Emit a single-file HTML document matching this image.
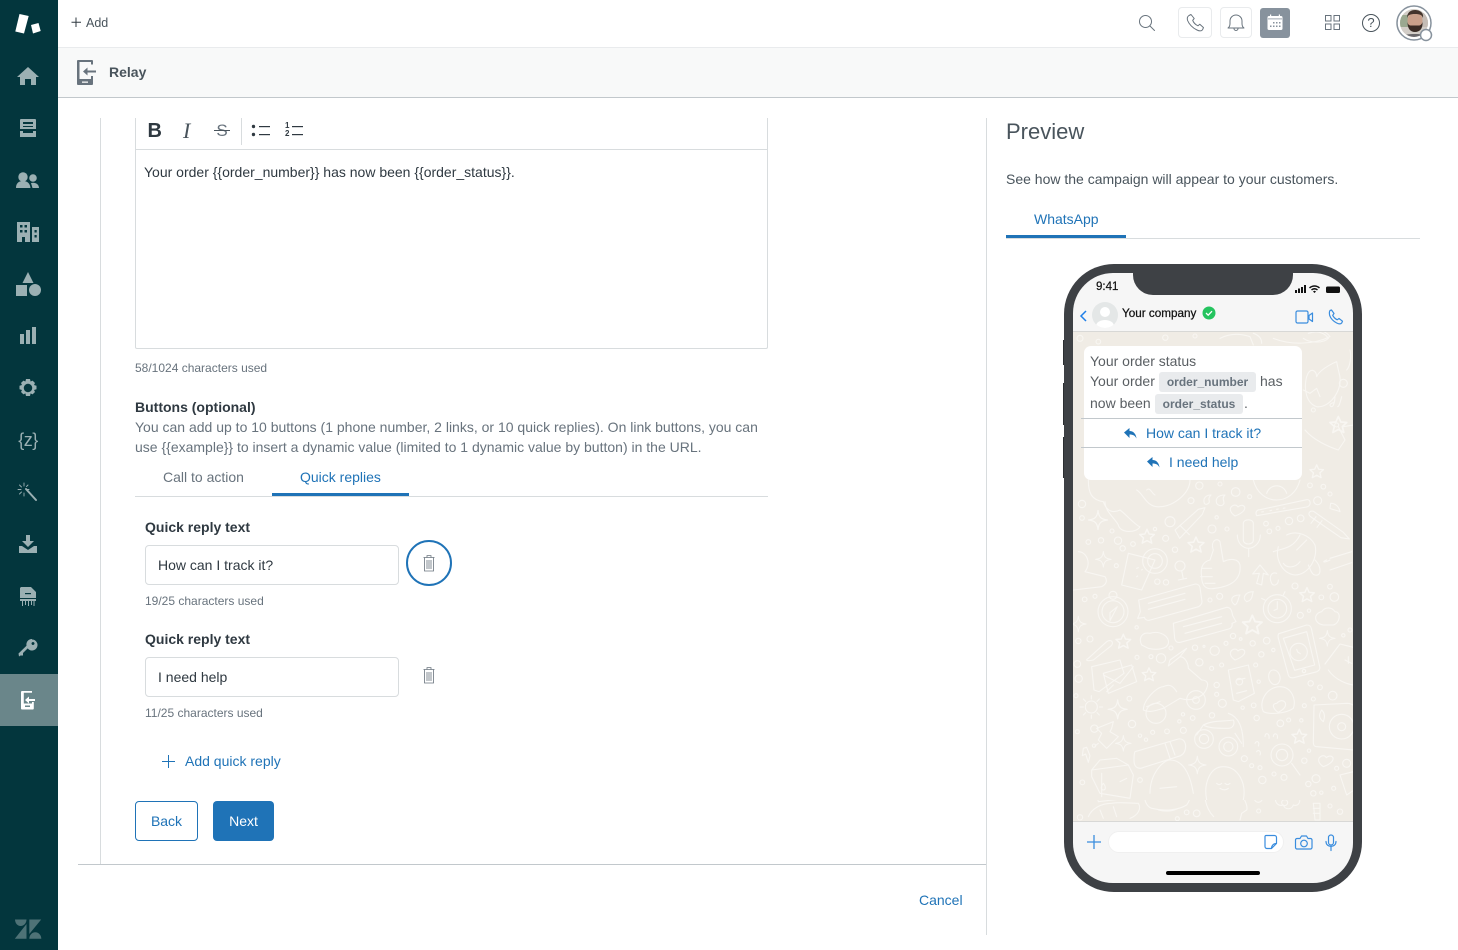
<!DOCTYPE html>
<html lang="en"><head><meta charset="utf-8"><title>Relay</title>
<style>
html,body{margin:0;padding:0;width:1458px;height:950px;overflow:hidden;background:#fff}
body{font-family:"Liberation Sans",Arial,sans-serif;color:#2f3941;position:relative;font-size:14px}
.a{position:absolute;white-space:nowrap}
.line{position:absolute;background:#d8dcde}
.hint{color:#68737d;font-size:12px;line-height:16px}
.lab{font-weight:700;font-size:14px;line-height:20px;color:#2f3941}
.body{color:#68737d;font-size:14px;line-height:20px}
.inp{position:absolute;left:145px;width:252px;height:38px;border:1px solid #d8dcde;border-radius:4px;line-height:38px;text-indent:12px;color:#2f3941;font-size:14px;background:#fff}
svg{position:absolute;overflow:visible}
.ic{fill:#9bb0b3;stroke:none}
.top{fill:none;stroke:#68737d;stroke-width:1;stroke-linecap:round;stroke-linejoin:round}
.blue{fill:none;stroke:#3a8dde;stroke-width:1.2;stroke-linecap:round;stroke-linejoin:round}
.box{position:absolute;border:1px solid #e9ebed;border-radius:4px;background:#fff;box-sizing:border-box}
.chip{position:absolute;background:#e9ebed;border-radius:3px;color:#68737d;font-weight:700;font-size:12px;line-height:20px;text-align:center}
.b{position:absolute;font-size:14px;line-height:20px;color:#5a5f63;white-space:nowrap}
.qr{position:absolute;color:#1f73b7;font-size:14px;line-height:20px;white-space:nowrap}
</style></head><body>

<!-- Sidebar -->
<div class="a" style="left:0;top:0;width:58px;height:950px;background:#03363d"></div>
<div class="a" style="left:0;top:674px;width:58px;height:52px;background:#6a868a"></div>
<svg style="left:0;top:0" width="58" height="950" viewBox="0 0 58 950">
<polygon points="19.5,14 28.7,16 24,33.5 15.3,31.5" fill="#fff"/>
<polygon points="31,25 38.5,23 40.7,31 33,33.5" fill="#fff"/>
<path class="ic" d="M28 67l11 10h-3v8h-5v-6h-6v6h-5v-8h-3z"/>
<path class="ic" d="M21 119h14a1 1 0 0 1 1 1v9H20v-9a1 1 0 0 1 1-1zm2 3v2h10v-2zm0 4v1h10v-1zM20 131h3v2h10v-2h3v6H20z" fill-rule="evenodd"/>
<circle class="ic" cx="23" cy="177" r="4.7"/><circle class="ic" cx="33" cy="178" r="3.8"/>
<path class="ic" d="M16 188c0-5 3-7 7-7s7 2 7.500 7zM31 183c4-1 8 1 8 5h-6.500z"/>
<path class="ic" d="M17 222h13v20h-5v-5h-3v5h-5zM32 227h7v15h-7z"/>
<g fill="#03363d"><rect x="20" y="225" width="2.500" height="2.500"/><rect x="24.500" y="225" width="2.500" height="2.500"/><rect x="20" y="230" width="2.500" height="2.500"/><rect x="24.500" y="230" width="2.500" height="2.500"/><rect x="34.500" y="230" width="2.200" height="2.500"/><rect x="34.500" y="235" width="2.200" height="2.500"/></g>
<polygon class="ic" points="28,272 33.500,283 22.500,283"/><rect class="ic" x="16" y="285" width="11" height="11"/><circle class="ic" cx="35" cy="290" r="6"/>
<rect class="ic" x="20" y="334" width="4" height="10"/><rect class="ic" x="26" y="330" width="4" height="14"/><rect class="ic" x="32" y="327" width="4" height="17"/>
<path class="ic" fill-rule="evenodd" d="M26 379h4l.6 2.500 2-.9 2.400 2.400-1 2 2.500.8v3.400l-2.500.8 1 2-2.400 2.400-2-1-.6 2.600h-4l-.6-2.600-2 1-2.400-2.400 1-2-2.500-.8v-3.400l2.500-.8-1-2 2.400-2.400 2 .9zM28 383.800a4.200 4.200 0 1 0 .01 0z"/>
<g stroke="#9bb0b3" fill="none" stroke-linecap="round">
<path stroke-width="2" d="M26 489l10 11"/>
<path stroke-width=".9" d="M24 483v3M24 493v3M18 489.500h3M27 489.500h2M19.500 485l2 2M19.500 494l2-2M28 485l-1.500 1.500"/>
</g>
<path class="ic" d="M26 535h4v6h4l-6 6-6-6h4zM19 546h3l6 4 6-4h3v7H19z"/>
<path class="ic" d="M21 587h10l5 5v6H20v-10zM20 599h16v2H20z"/>
<g stroke="#9bb0b3" stroke-width="1" fill="none"><path d="M22.500 601v5M25.500 601v4M28.500 601v5M31.500 601v4M34 601v5"/></g>
<rect x="25" y="593" width="6" height="1.200" fill="#03363d"/>
<path class="ic" fill-rule="evenodd" d="M32 639.500a5.500 5.500 0 1 1-4.300 8.900L23 653v2.500h-2.500l-1.500 1-.500-3 8-7.800a5.500 5.500 0 0 1 5.500-6.700zm1 2.500a1.500 1.500 0 1 0 .01 0z"/>
<g fill="#fff"><path d="M22 691h10v1.800h-8.200v10.700H32v-1.500h1.800v6.500a1 1 0 0 1-1 1H22a1 1 0 0 1-1-1v-16.500a1 1 0 0 1 1-1z"/><path d="M35 699h-6v-2.500l-4 3.500 4 3.500V701h6z"/><rect x="25" y="705.500" width="5" height="1.500" fill="#6a868a"/></g>
<g fill="#4e7276"><path d="M15 919.500h11.500c0 3.500-2.500 6.500-6 6.500-3 0-5.500-3-5.500-6.500z"/><polygon points="26.500,924 26.500,938.700 14.800,938.700"/><polygon points="29.300,919.500 41.200,919.500 29.300,934"/><path d="M29.300 938.700c0-3.500 2.600-6.500 6-6.500s6 3 6 6.500z"/></g>
</svg>
<div class="a" style="left:0;top:430px;width:56px;text-align:center;color:#9bb0b3;font-family:'Liberation Sans',sans-serif;font-size:18px;line-height:20px;letter-spacing:-.5px">{z}</div>

<!-- Top bar -->
<div class="a" style="left:58px;top:47px;width:1400px;height:1px;background:#e9ebed"></div>
<svg style="left:70.500px;top:16.500px" width="12" height="12"><path d="M5 .5v9.500M.5 5.200h9.500" stroke="#2f3941" stroke-width="1" fill="none"/></svg>
<div class="a" style="left:86px;top:14.500px;font-size:12.500px;line-height:16px;color:#49545c">Add</div>

<svg style="left:1138px;top:14px" width="18" height="18" viewBox="0 0 18 18"><circle class="top" cx="7.500" cy="7.500" r="6"/><path class="top" d="M12 12l4.500 4.500"/></svg>
<div class="box" style="left:1178px;top:7px;width:34px;height:31px"></div>
<svg style="left:1186px;top:14px" width="18" height="18" viewBox="0 0 18 18"><path class="top" d="M3 1.500l2-1 3.200 4-1.500 1.800c.7 2 2.700 4.300 5.300 5.500l1.800-1.500 3.700 3.300-1 2.200c-1 1.200-3 1.500-5.500.2C6.500 14 3 10 1.600 6.500c-.6-2-.2-4 1.400-5z"/></svg>
<div class="box" style="left:1220px;top:7px;width:32px;height:31px"></div>
<svg style="left:1227px;top:14px" width="18" height="18" viewBox="0 0 18 18"><path class="top" d="M1 14c1.500-1 2-2.500 2-4.500V7a6 6 0 0 1 12 0v2.500c0 2 .5 3.500 2 4.500zM7 14.500a2 2 0 0 0 4 0"/></svg>
<div class="a" style="left:1260px;top:8px;width:30px;height:30px;background:#87929d;border-radius:3px"></div>
<svg style="left:1267px;top:14px" width="17" height="18" viewBox="0 0 17 18"><rect x=".5" y="2" width="15" height="14" rx="1.500" fill="#fff"/><rect x="3" y=".5" width="1.200" height="3" fill="#fff"/><rect x="11.800" y=".5" width="1.200" height="3" fill="#fff"/><rect x="1" y="4.500" width="14" height=".8" fill="#87929d"/><g fill="#87929d"><rect x="6" y="8" width="1.500" height="1.500"/><rect x="9" y="8" width="1.500" height="1.500"/><rect x="12" y="8" width="1.500" height="1.500"/><rect x="3" y="11.500" width="1.500" height="1.500"/><rect x="6" y="11.500" width="1.500" height="1.500"/><rect x="9" y="11.500" width="1.500" height="1.500"/><rect x="12" y="11.500" width="1.500" height="1.500"/></g></svg>
<svg style="left:1325px;top:15px" width="16" height="16" viewBox="0 0 16 16"><g fill="none" stroke="#68737d"><rect x=".5" y=".5" width="5.500" height="5.500"/><rect x="9" y=".5" width="5.500" height="5.500"/><rect x=".5" y="9" width="5.500" height="5.500"/><rect x="9" y="9" width="5.500" height="5.500"/></g></svg>
<svg style="left:1362px;top:14px" width="18" height="18" viewBox="0 0 18 18"><circle cx="9" cy="9" r="8.500" fill="none" stroke="#49545c"/></svg>
<div class="a" style="left:1362px;top:14px;width:18px;text-align:center;font-size:13px;line-height:18px;color:#49545c">?</div>
<svg style="left:1396px;top:5px" width="38" height="38" viewBox="0 0 38 38">
<circle cx="18" cy="18" r="17" fill="#fff" stroke="#87929d" stroke-width="1.500"/>
<clipPath id="av"><circle cx="18" cy="18" r="14"/></clipPath>
<g clip-path="url(#av)"><rect x="0" y="0" width="36" height="36" fill="#d2cdc7"/><rect x="3" y="10" width="9" height="12" fill="#9aa890"/><rect x="25" y="8" width="9" height="14" fill="#c4bcb5"/>
<ellipse cx="19" cy="16" rx="7.500" ry="10" fill="#c9a08a"/>
<path d="M11 13c0-6 4-8 8-8s9 2 8 8c-1-3-3-4-8-4s-7 1-8 4z" fill="#43342c"/>
<path d="M11.500 17c0 7 3 10 7.500 10s8-3 7.500-10c-1 3-2.500 3.500-3.500 3.500h-8c-1.500 0-3-.5-3.500-3.500z" fill="#3a2c25"/>
<path d="M3 36c1-6 7-7 16-7s13 1 14 7z" fill="#6a686b"/></g>
<circle cx="30" cy="30" r="5.500" fill="#fff" stroke="#87929d" stroke-width="1.500"/>
</svg>

<!-- Sub header -->
<div class="a" style="left:58px;top:48px;width:1400px;height:49px;background:#f8f9f9"></div>
<div class="a" style="left:58px;top:97px;width:1400px;height:1px;background:#c2c8cc"></div>
<svg style="left:76px;top:59px" width="21" height="27" viewBox="0 0 21 27"><path d="M2 1h14a1 1 0 0 1 1 1v3.500h-2V3H3.500v17H15v-3h2v8a1 1 0 0 1-1 1H2a1 1 0 0 1-1-1V2a1 1 0 0 1 1-1z" fill="#68737d"/><rect x="6" y="22.500" width="6" height="1.300" fill="#f8f9f9"/><path d="M20 11.500h-8.500V8.500L7 12.500l4.500 4v-3H20z" fill="#68737d"/></svg>
<div class="a" style="left:109px;top:63px;font-weight:700;font-size:14px;line-height:18px;color:#49545c">Relay</div>

<!-- Main lines -->
<div class="line" style="left:100px;top:118px;width:1px;height:746px"></div>
<div class="line" style="left:986px;top:118px;width:1px;height:817px"></div>
<div class="a" style="left:78px;top:864px;width:908px;height:1px;background:#c2c8cc"></div>

<!-- Editor -->
<div class="a" style="left:135px;top:118px;width:631px;height:230px;border:1px solid #d8dcde;border-top:0;border-radius:0 0 2px 2px"></div>
<div class="a" style="left:136px;top:149px;width:631px;height:1px;background:#d8dcde"></div>
<div class="a" style="left:147.500px;top:119px;font-weight:700;font-size:20px;line-height:24px;color:#2f3941">B</div>
<div class="a" style="left:183px;top:118.500px;font-family:'Liberation Serif',serif;font-style:italic;font-size:22px;line-height:24px;color:#49545c">I</div>
<div class="a" style="left:215px;top:118.500px;font-family:'Liberation Sans',sans-serif;font-size:17px;line-height:24px;color:#68737d;width:14px;text-align:center">S</div>
<div class="a" style="left:214px;top:130px;width:16px;height:1px;background:#49545c"></div>
<div class="a" style="left:241px;top:118px;width:1px;height:27px;background:#d8dcde"></div>
<svg style="left:251px;top:123px" width="54" height="16" viewBox="0 0 54 16"><g fill="#2f3941"><circle cx="2.500" cy="3.500" r="1.700"/><circle cx="2.500" cy="11.500" r="1.700"/><rect x="8" y="3" width="11" height="1.200"/><rect x="8" y="11" width="11" height="1.200"/><rect x="41" y="3" width="11" height="1.200"/><rect x="41" y="11" width="11" height="1.200"/></g></svg>
<div class="a" style="left:285px;top:122px;font-size:8px;line-height:8px;font-weight:700;color:#2f3941">1<br>2</div>
<div class="a" style="left:144px;top:162px;font-size:14px;line-height:20px;color:#2f3941">Your order {{order_number}} has now been {{order_status}}.</div>

<div class="a hint" style="left:135px;top:360px">58/1024 characters used</div>
<div class="a lab" style="left:135px;top:397px">Buttons (optional)</div>
<div class="a body" style="left:135px;top:417px">You can add up to 10 buttons (1 phone number, 2 links, or 10 quick replies). On link buttons, you can</div>
<div class="a body" style="left:135px;top:437px">use {{example}} to insert a dynamic value (limited to 1 dynamic value by button) in the URL.</div>

<div class="a body" style="left:163px;top:467px;color:#68737d">Call to action</div>
<div class="a body" style="left:300px;top:467px;color:#1f73b7">Quick replies</div>
<div class="a" style="left:135px;top:496px;width:633px;height:1px;background:#d8dcde"></div>
<div class="a" style="left:272px;top:493px;width:137px;height:3px;background:#1f73b7"></div>

<div class="a lab" style="left:145px;top:517px">Quick reply text</div>
<div class="inp" style="top:545px">How can I track it?</div>
<div class="a" style="left:406px;top:540px;width:42px;height:42px;border:2px solid #1f73b7;border-radius:50%"></div>
<svg style="left:423px;top:555px" width="12" height="17" viewBox="0 0 12 17"><g fill="none" stroke="#68737d" stroke-width=".8"><path d="M.5 2.500h11M4 2.500V.6h4v1.900M1.500 2.500v13.500h9V2.500M4 5v9M6 5v9M8 5v9"/></g></svg>
<div class="a hint" style="left:145px;top:593px">19/25 characters used</div>

<div class="a lab" style="left:145px;top:629px">Quick reply text</div>
<div class="inp" style="top:657px">I need help</div>
<svg style="left:423px;top:667px" width="12" height="17" viewBox="0 0 12 17"><g fill="none" stroke="#68737d" stroke-width=".8"><path d="M.5 2.500h11M4 2.500V.6h4v1.900M1.500 2.500v13.500h9V2.500M4 5v9M6 5v9M8 5v9"/></g></svg>
<div class="a hint" style="left:145px;top:705px">11/25 characters used</div>

<svg style="left:162px;top:755px" width="14" height="14"><path d="M6.500 0v13M0 6.500h13" stroke="#1f73b7" stroke-width="1" fill="none"/></svg>
<div class="a" style="left:185px;top:751px;font-size:14px;line-height:20px;color:#1f73b7">Add quick reply</div>

<div class="a" style="left:135px;top:801px;width:61px;height:38px;border:1px solid #1f73b7;border-radius:4px;text-align:center;line-height:38px;color:#1f73b7;font-size:14px">Back</div>
<div class="a" style="left:213px;top:801px;width:61px;height:40px;background:#1f73b7;border-radius:4px;text-align:center;line-height:40px;color:#fff;font-size:14px">Next</div>
<div class="a" style="left:919px;top:890px;font-size:14px;line-height:20px;color:#1f73b7">Cancel</div>

<!-- Preview -->
<div class="a" style="left:1006px;top:118px;font-size:22px;line-height:28px;color:#49545c">Preview</div>
<div class="a" style="left:1006px;top:169px;font-size:14px;line-height:20px;color:#49545c">See how the campaign will appear to your customers.</div>
<div class="a" style="left:1034px;top:209px;font-size:14px;line-height:20px;color:#1f73b7">WhatsApp</div>
<div class="a" style="left:1006px;top:238px;width:414px;height:1px;background:#d8dcde"></div>
<div class="a" style="left:1006px;top:235px;width:120px;height:3px;background:#1f73b7"></div>

<!-- Phone -->
<div class="a" style="left:1063px;top:340px;width:2px;height:25px;background:#2b2e31"></div>
<div class="a" style="left:1063px;top:383px;width:2px;height:42px;background:#2b2e31"></div>
<div class="a" style="left:1063px;top:437px;width:2px;height:41px;background:#2b2e31"></div>
<div class="a" style="left:1064px;top:264px;width:298px;height:628px;border-radius:50px;background:#3e4145"></div>
<div class="a" style="left:1073px;top:273px;width:280px;height:610px;border-radius:40px;background:#f6f6f6;overflow:hidden">
 <div class="a" style="left:0;top:59px;width:280px;height:489px;background:#f0ece5"></div>
 <div class="a" style="left:0;top:58px;width:280px;height:1px;background:#d8d8d6"></div>
 <div class="a" style="left:0;top:548px;width:280px;height:1px;background:#d8d8d6"></div>
</div>
<div class="a" style="left:1133px;top:272px;width:160px;height:23px;background:#3e4145;border-radius:0 0 20px 20px"></div>
<div class="a" style="left:1096px;top:280px;font-size:11.500px;line-height:14px;font-weight:400;color:#111;-webkit-text-stroke:.2px #111">9:41</div>
<svg style="left:1294px;top:283px" width="48" height="12" viewBox="0 0 48 12"><g fill="#111"><rect x="1" y="7" width="2" height="3"/><rect x="4" y="5.500" width="2" height="4.500"/><rect x="7" y="4" width="2" height="6"/><rect x="10" y="2" width="2" height="8"/><path d="M15 4.500c3-3 8-3 11 0l-1 1c-2.500-2.300-6.500-2.300-9 0zM17 6.500c2-2 5-2 7 0l-1 1c-1.500-1.200-3.500-1.200-5 0zM19 8.500c1-1 2-1 3 0l-1.500 1.500z"/><rect x="32" y="3.500" width="14" height="6.500" rx="1.500"/></g></svg>

<!-- Header in phone -->
<svg style="left:1078px;top:301px" width="140" height="30" viewBox="0 0 140 30">
<path d="M8 10l-5 5 5 5" fill="none" stroke="#1f7fe8" stroke-width="1.500"/>
<circle cx="27" cy="14" r="13" fill="#e4e7e7"/>
<clipPath id="pa"><circle cx="27" cy="14" r="13"/></clipPath>
<g clip-path="url(#pa)" fill="#fff"><circle cx="27" cy="11" r="5"/><ellipse cx="27" cy="25" rx="9" ry="6"/></g>
<circle cx="131" cy="12" r="6.500" fill="#25c45f"/><path d="M128 12l2.200 2.200 3.800-4" stroke="#fff" stroke-width="1.300" fill="none"/>
</svg>
<div class="a" style="left:1122px;top:306px;font-size:11.700px;line-height:15px;color:#111;-webkit-text-stroke:.25px #111">Your company</div>
<svg style="left:1295px;top:309px" width="50" height="18" viewBox="0 0 50 18">
<path class="blue" d="M1 3.500a1.500 1.500 0 0 1 1.500-1.500h9A1.500 1.500 0 0 1 13 3.500v9a1.500 1.500 0 0 1-1.500 1.500h-9A1.500 1.500 0 0 1 1 12.500zM14 6.500l3.500-2.500v8.500L14 10z" />
<path class="blue" d="M35 1.500l1.500-.5 2.500 3.500-1.300 1.800c1 2 2.500 3.500 4.500 4.500l1.800-1.300 3.500 2.700-.8 1.800c-1 1.200-3 1-5 0-3-1.500-6-4.500-7-7.500-.5-2-.3-4 .3-5z"/>
</svg>

<!-- Wallpaper doodles -->
<svg style="left:1073px;top:332px" width="280" height="489" viewBox="1073 332 280 489">
<clipPath id="wc"><rect x="1073" y="332" width="280" height="468"/></clipPath>
<clipPath id="wd"><rect x="1073" y="800" width="280" height="21"/></clipPath>
<defs>
<path id="st" d="M0-17L5-6 17-5 8 3 11 15 0 9-11 15-8 3-17-5-5-6z"/>
<path id="sp" d="M0-26C2-8 8-2 26 0 8 2 2 8 0 26-2 8-8 2-26 0-8-2-2-8 0-26z"/>
</defs>
<g clip-path="url(#wc)" fill="none" stroke="#f8f6f2" stroke-linecap="round" stroke-linejoin="round">
<g transform="translate(1070 480) scale(.33333)" stroke-width="3.300">
 <path d="M55 0c0 40 10 60 45 65 10 30 30 35 50 25 15 10 50 50 60 50-10 20-60 20-65-5-10-20-40-40-40-70M200 30c20 10 30 55 70 50 40 0 90-40 90-80M230 30c10-10 15 10 25 15"/>
 <path d="M550 0c10 40 40 60 70 60s60-20 70-60M590 40c10-30 50-30 60 0"/>
 <circle cx="36" cy="72" r="11"/><circle cx="36" cy="114" r="7"/><circle cx="388" cy="17" r="11"/><circle cx="363" cy="62" r="9"/><circle cx="497" cy="36" r="13"/><circle cx="450" cy="12" r="6"/><circle cx="539" cy="50" r="6"/><circle cx="300" cy="125" r="15"/><circle cx="426" cy="147" r="12"/><circle cx="440" cy="112" r="5"/><circle cx="471" cy="147" r="6"/><circle cx="657" cy="123" r="11"/><circle cx="692" cy="115" r="10"/><circle cx="743" cy="62" r="12"/><circle cx="720" cy="16" r="7"/><circle cx="760" cy="20" r="7"/><circle cx="780" cy="42" r="6"/><circle cx="588" cy="131" r="7"/><circle cx="598" cy="154" r="7"/><circle cx="624" cy="145" r="6"/><circle cx="126" cy="153" r="6"/><circle cx="55" cy="186" r="7"/><circle cx="93" cy="181" r="8"/><circle cx="144" cy="182" r="11"/><circle cx="158" cy="205" r="8"/><circle cx="189" cy="192" r="7"/><circle cx="255" cy="147" r="5"/><circle cx="287" cy="175" r="9"/><circle cx="315" cy="209" r="8"/><circle cx="139" cy="257" r="6"/>
 <path d="M315 150l70-62 20-5-8 20-68 72zM330 136l28 28"/>
 <path d="M403 70c-5-15 5-25 20-25-10 10-5 15-5 20s-10 12-15 5zM440 70c-5-15 5-25 25-25-10 10-3 15-3 25-5 10-17 8-22 0z"/>
 <path d="M495 108c-15-10-20-25-5-32 8-3 12 2 14 5 5-5 15-8 20 0 3 12-15 22-29 27z"/>
 <path d="M560 107c-5-10 0-18 10-18l140-30c14-2 14 20 0 22z"/><path d="M575 96l5-1M600 92l5-1M620 88l5-1M640 85l5-1"/>
 <path d="M782 70c15 0 25 10 28 25-10-5-20-5-30-10z"/>
 <use href="#sp" transform="translate(84 120) scale(1.100)"/>
 <use href="#st" transform="translate(231 170) scale(1.300)"/>
 <use href="#st" transform="translate(378 195) scale(1.400)"/>
 <path d="M735 97l85 60 18 20-25-4-90-62c-15-10 0-25 12-14zM738 110l-15 20M756 122l-15 20"/>
 <path d="M520 130c0-14 30-14 30 0v50c0 16-30 16-30 0zM502 165c0 28 20 40 34 40s35-14 35-40M536 205v25"/>
 <path d="M620 280c-15-5-25 10-15 30 5 10 20 5 20-10M650 165c30-15 70 0 85 30 10 40-20 90-60 90-40-5-60-50-50-85M610 215c30-10 60-10 80-50M680 210l30-30 M640 250c10 15 35 15 50-5M735 240c20 20 20 50 0 45-10 0-15-20-20-30"/>
 <path d="M780 235l65-20M780 270l65-22M770 240c-15 5-10 10 10 0"/>
 <path d="M570 255l25 30-15-5-5 35-15-5 8-30-20 2z"/>
 <path d="M25 215c25 0 40 35 20 60l60 15c10 15 0 25-10 30L10 330"/>
 <path d="M175 220l80 20-40 90-60-15zM200 265l5-2M215 270l2-2M200 290l3-2"/><circle cx="255" cy="243" r="37"/><circle cx="255" cy="243" r="22"/>
 <circle cx="262" cy="305" r="8"/><circle cx="288" cy="307" r="8"/>
 <circle cx="330" cy="258" r="15"/><path d="M335 272l5 25M325 300l25-5"/>
 <path d="M420 240c-20 5-30 20-25 50 0 30 15 40 40 35 40-5 80-20 75-70-5-20-30-20-50-10l-10-60c-10-15-30 0-20 25zM395 265h30M392 290h35M405 310h30"/>
 <path d="M206 360l170-48c12 0 15 10 15 18l5 35c0 8-5 12-10 15l-145 40c-8 3-15 0-18-8l-20 3 8-20z"/>
 <path d="M235 370l110-30M235 388l110-30"/>
 <path d="M310 430l160-48c12 0 15 8 18 25l10 18-12 5c2 10-3 15-10 17l-145 40c-10 2-15-3-17-12z"/><path d="M340 440l115-30M345 460l110-30"/>
 <circle cx="129" cy="395" r="45"/><circle cx="129" cy="395" r="33"/><circle cx="129" cy="346" r="12"/><path d="M142 380l-22 42 0-24z"/>
 <circle cx="622" cy="386" r="42"/><circle cx="622" cy="386" r="28"/><path d="M622 365v22l-10 4M575 355l10 5M645 335l-5 10"/>
 <path d="M495 375c-15-10-15-30 15-30-5 5-5 25-15 30zM530 365c-15-10-5-30 20-30-5 10 0 25-20 30z"/>
 <path d="M760 435c-30-5-30-35-5-40 10-15 30-15 40 0 20 0 15 35-5 40z"/>
 <use href="#st" transform="translate(711 345) scale(1.300)"/>
 <use href="#st" transform="translate(547 435) scale(1.700)"/>
 <use href="#st" transform="translate(160 485) scale(1.300)"/>
 <use href="#sp" transform="translate(25 432) scale(.9)"/>
 <use href="#sp" transform="translate(772 475) scale(.9)"/>
 <use href="#sp" transform="translate(100 238) scale(.9)"/>
 <path d="M215 495c-10-20 0-40 25-35 30-10 60 10 55 30-5 20-40 20-60 15z"/>
 <path d="M55 535l55-50c15-10 25 5 10 15l-50 40c-20 5-25 0-15-5z"/>
 <circle cx="200" cy="442" r="5"/><circle cx="25" cy="483" r="8"/><circle cx="60" cy="477" r="9"/><circle cx="201" cy="532" r="6"/><circle cx="243" cy="530" r="6"/><circle cx="273" cy="535" r="14"/><circle cx="375" cy="503" r="8"/><circle cx="402" cy="499" r="3"/><circle cx="434" cy="512" r="14"/><circle cx="468" cy="490" r="6"/><circle cx="489" cy="468" r="8"/><circle cx="512" cy="477" r="4"/><circle cx="548" cy="490" r="8"/><circle cx="590" cy="482" r="10"/><circle cx="574" cy="523" r="8"/><circle cx="610" cy="510" r="5"/><circle cx="557" cy="555" r="6"/><circle cx="420" cy="360" r="6"/><circle cx="449" cy="349" r="9"/><circle cx="675" cy="318" r="9"/><circle cx="780" cy="320" r="7"/><circle cx="754" cy="352" r="7"/><circle cx="793" cy="351" r="13"/><circle cx="691" cy="406" r="9"/><circle cx="717" cy="392" r="5"/><circle cx="44" cy="358" r="7"/><circle cx="75" cy="349" r="6"/><circle cx="840" cy="450" r="6"/><circle cx="820" cy="466" r="5"/><circle cx="303" cy="504" r="6"/><circle cx="388" cy="547" r="11"/><circle cx="425" cy="565" r="6"/><circle cx="455" cy="555" r="6"/><circle cx="440" cy="615" r="8"/><circle cx="440" cy="643" r="6"/><circle cx="457" cy="670" r="12"/><circle cx="566" cy="605" r="5"/><circle cx="518" cy="683" r="5"/><circle cx="551" cy="676" r="7"/><circle cx="22" cy="552" r="10"/><circle cx="26" cy="596" r="11"/><circle cx="18" cy="647" r="6"/><circle cx="178" cy="656" r="7"/><circle cx="426" cy="706" r="8"/><circle cx="368" cy="714" r="7"/><circle cx="339" cy="703" r="5"/><circle cx="328" cy="724" r="5"/><circle cx="722" cy="610" r="8"/><circle cx="750" cy="622" r="7"/><circle cx="788" cy="647" r="13"/><circle cx="703" cy="677" r="6"/><circle cx="730" cy="657" r="6"/><circle cx="560" cy="714" r="8"/><circle cx="631" cy="730" r="10"/><circle cx="656" cy="720" r="6"/><circle cx="694" cy="721" r="5"/>
 <path d="M630 460l80-25c8 0 12 3 14 10l25 115c2 8-2 12-8 15l-70 18c-10 2-14-2-16-8l-30-110c-2-10 0-15 5-15zM640 475l70-20 24 100-60 16z"/><circle cx="686" cy="516" r="26"/><path d="M680 508l3 8 8 5"/><circle cx="702" cy="573" r="5"/>
 <path d="M495 540c-15-10-20-25-5-32 8-3 12 2 14 5 5-5 15-8 20 0 3 12-15 22-29 27z"/>
 <path d="M765 552l45-60 40 10M775 570c20 30 60 45 80 45M825 540l20 10M835 530v20"/>
 <path d="M65 560l85-20 12 40-75 55-15-5z"/><path d="M100 580l85-25 15 50-85 35zM100 585l50 25 40-50M110 635l20-20"/>
 <use href="#st" transform="translate(237 584) scale(1.200)"/>
 <path d="M330 530l20-25-50 35-5 18zM330 530c15 0 25 20 25 35l40 35c20 0 20 15 15 25-10 30-50 40-80 30l-50 30c-20 5-40 15-60 5 0-30 40-70 60-70 20-10 30 0 40 15"/><circle cx="378" cy="660" r="28"/><circle cx="378" cy="660" r="10"/><circle cx="258" cy="700" r="30"/><path d="M230 680l40-15"/>
 <path d="M475 570l60-15 18 85-48 25-15-5zM500 600l25-5M500 640l30-8"/><circle cx="508" cy="605" r="10"/>
 <path d="M610 570c15 0 25 20 18 35-5 10-20 15-30-5-5-15 0-30 12-30zM580 695c-15-30 10-75 50-75 35 0 50 40 40 65-20 15-70 20-90 10zM620 670c10-10 20-10 25-3 5 8 0 20-20 30-10-5-25-25-5-27z"/>
 <path d="M732 675l100-5c10 0 20 5 20 10v130l-110-10c-10 0-12-5-12-15z"/><circle cx="815" cy="740" r="37"/><circle cx="815" cy="740" r="12"/><path d="M755 690c-10 15-8 25 5 35 5-15 5-25-5-35z"/>
 <circle cx="64" cy="681" r="18"/><path d="M64 647v10M64 705v10M30 681h10M88 681h10M40 657l7 7M88 705l-7-7M88 657l-7 7M40 705l7-7"/>
 <use href="#sp" transform="translate(143 688) scale(1.100)"/>
 <use href="#sp" transform="translate(160 790) scale(.9)"/>
 <use href="#sp" transform="translate(382 855) scale(1)"/>
 <use href="#st" transform="translate(688 770) scale(1.300)"/>
 <circle cx="73" cy="746" r="11"/><circle cx="22" cy="755" r="6"/><circle cx="72" cy="797" r="5"/><circle cx="186" cy="732" r="11"/><circle cx="210" cy="767" r="5"/><circle cx="228" cy="779" r="5"/><circle cx="248" cy="757" r="6"/><circle cx="291" cy="754" r="7"/><circle cx="340" cy="751" r="9"/><circle cx="523" cy="836" r="9"/><circle cx="545" cy="857" r="6"/><circle cx="570" cy="863" r="6"/><circle cx="577" cy="900" r="11"/><circle cx="612" cy="882" r="6"/><circle cx="642" cy="892" r="9"/><circle cx="703" cy="842" r="8"/><circle cx="717" cy="812" r="5"/><circle cx="830" cy="850" r="12"/><circle cx="800" cy="865" r="6"/><circle cx="738" cy="896" r="12"/><circle cx="715" cy="912" r="8"/><circle cx="754" cy="938" r="5"/><circle cx="730" cy="940" r="8"/><circle cx="791" cy="925" r="6"/><circle cx="37" cy="907" r="7"/><circle cx="210" cy="900" r="7"/>
 <path d="M80 745l50-20-5 20-5 10 25 15-20 20-15 15-25-25 10-20zM85 790l-10 8"/>
 <path d="M40 805l10-3 10 25-5 20-8-25-10 5z"/>
 <path d="M195 815l130-38c12-2 20 5 22 20 0 15-5 25-15 30l-120 38c-12 0-20-5-20-25 0-10 0-20 3-25zM300 785l15 40M285 790l15 45"/>
 <path d="M400 735c30-15 60-10 90-15 5 10 0 25-15 25-30 0-60 0-75-10zM475 700c30 10 45 40 45 100M400 735l-20 30M495 760l20 30"/><circle cx="402" cy="777" r="28"/><circle cx="402" cy="777" r="14"/><circle cx="475" cy="800" r="28"/><circle cx="475" cy="800" r="14"/>
 <circle cx="636" cy="825" r="33"/><circle cx="636" cy="825" r="17"/><path d="M665 850l25 35M585 770c0-15 15-10 12 5M610 770c0-12 15-12 12 5M555 790c5-10 15-5 10 8M560 815c5-8 15 0 10 10"/>
 <path d="M760 860c-15-10-20-25-5-32 8-3 12 2 14 5 5-5 15-8 20 0 3 12-15 22-29 27z"/>
 <path d="M810 885l40-10 10 50-30 20z"/>
 <path d="M65 870l110-15 15 30-10 70-90-15-25-50zM65 870l25-30 50-5 35 20M95 880v70"/><path d="M100 910c-8 10-8 20 0 20s8-10 0-20zM150 905l20-10"/>
 <path d="M240 940c0-60 40-100 60-100 40 0 60 40 70 100M270 925l50-5"/>
 <path d="M410 960c-10-50 10-100 50-100 45 0 70 50 60 100M440 910c5 5 10 5 15 0M465 910c5 5 10 5 15 0M450 925c8 6 18 6 25 0"/>
</g>
<g transform="translate(1060 260) scale(.33333)" stroke-width="3.300">
 <circle cx="316" cy="233" r="8"/><circle cx="405" cy="228" r="6"/><circle cx="60" cy="235" r="9"/><circle cx="115" cy="245" r="7"/><circle cx="850" cy="370" r="12"/><circle cx="760" cy="450" r="6"/><circle cx="830" cy="495" r="6"/>
 <path d="M480 235c30-15 60-15 90-5l10 25M580 220c15 5 25 15 25 30M640 235c50 20 120 20 170-5 -10-15-30-20-40-20"/>
 <path d="M740 350c10-30 30-20 30 0 10-25 60-45 60-45 5 30 10 40 10 50 5 35-30 90-70 85-30-10-40-50-30-90zM730 390l20 10 20-15 10 25"/>
 <use href="#st" transform="translate(835 495) scale(1.500)"/>
 <path d="M825 410c0 15-5 30-10 30s-10-8 5-12M845 410c-5 20-8 30-12 30"/>
 <path d="M735 510c25 30 70 50 100 60l20-30-20-40M850 500l30-5"/>
 <path d="M870 270c5 20 0 50-10 60"/>
 <use href="#st" transform="translate(770 635) scale(1.200)"/>
 <path d="M745 220c30-10 50 0 60 15M730 235c20 15 60 15 75 0"/>
</g>
</g>
<g clip-path="url(#wd)" fill="none" stroke="#f8f6f2" stroke-linecap="round" stroke-linejoin="round">
<g transform="translate(1060 760) scale(.33333)" stroke-width="3.300">
 <circle cx="595" cy="115" r="12"/><circle cx="596" cy="153" r="6"/><circle cx="410" cy="160" r="10"/><circle cx="380" cy="157" r="7"/><circle cx="352" cy="176" r="6"/><circle cx="60" cy="172" r="8"/><circle cx="840" cy="155" r="8"/><circle cx="810" cy="138" r="6"/>
 <path d="M100 70l15 55 85-10M200 115l10-50"/>
 <path d="M255 95c-5 25 5 45 20 50 40 10 80 5 105-10 15-20 15-50 5-65M295 150c20 5 40 5 60-5"/>
 <path d="M436 120c5 25 15 40 25 50M530 100c20 0 35 40 30 50l-15 10-5 20"/>
 <path d="M670 80c10-15 25-15 30 0 20 0 25 20 15 30 10 15 0 30-15 25-5 15-25 15-30 0-15 5-30-10-20-25-15-10-5-30 20-30z"/><circle cx="674" cy="128" r="9"/>
 <path d="M85 170c10-25 40-40 70-40 25-5 50 0 80 0 10 15 0 35-25 45M120 150l10 25M160 140l10 30"/>
 <path d="M760 130h20v50h-15zM760 145h20M760 160h20"/>
</g>
</g>
</svg>

<!-- Message bubble -->
<div class="a" style="left:1084px;top:346px;width:218px;height:134px;background:#fff;border-radius:7px"></div>
<div class="b" style="left:1090px;top:351px">Your order status</div>
<div class="b" style="left:1090px;top:371px">Your order</div>
<div class="chip" style="left:1159px;top:372px;width:97px">order_number</div>
<div class="b" style="left:1260px;top:371px">has</div>
<div class="b" style="left:1090px;top:393px">now been</div>
<div class="chip" style="left:1155px;top:394px;width:88px">order_status</div>
<div class="b" style="left:1244px;top:393px">.</div>
<div class="a" style="left:1081px;top:418px;width:221px;height:1px;background:#c2c8cc"></div>
<div class="a" style="left:1081px;top:447px;width:221px;height:1px;background:#c2c8cc"></div>
<svg style="left:1124px;top:428px" width="13" height="11" viewBox="0 0 13 11"><path d="M0 4.500L5.500 0v3c4 0 6.500 3 7 7.500C11 7.500 9 6.500 5.500 6.500V10z" fill="#1f73b7"/></svg>
<div class="qr" style="left:1146px;top:423px">How can I track it?</div>
<svg style="left:1147px;top:457px" width="13" height="11" viewBox="0 0 13 11"><path d="M0 4.500L5.500 0v3c4 0 6.500 3 7 7.500C11 7.500 9 6.500 5.500 6.500V10z" fill="#1f73b7"/></svg>
<div class="qr" style="left:1169px;top:452px">I need help</div>

<!-- Input bar -->
<svg style="left:1086px;top:834px" width="16" height="16"><path d="M8 1v14M1 8h14" stroke="#3a8dde" stroke-width="1.300" fill="none"/></svg>
<div class="a" style="left:1108px;top:831px;width:174px;height:20px;background:#fff;border:1px solid #f0f0f0;border-radius:11px"></div>
<svg style="left:1264px;top:834px" width="80" height="18" viewBox="0 0 80 18">
<path class="blue" d="M2 1.500h8.500a2 2 0 0 1 2 2v6l-5 5H3a2 2 0 0 1-2-2v-10a1 1 0 0 1 1-1zM7.500 14.500c0-3 2-5 5-5"/>
<path class="blue" d="M33 4.500h3l1.500-2.500h5L44 4.500h2.500a1.500 1.500 0 0 1 1.500 1.500v7.500a1.500 1.500 0 0 1-1.500 1.500h-13.500a1.500 1.500 0 0 1-1.500-1.500V6a1.500 1.500 0 0 1 1.500-1.500z"/><circle class="blue" cx="40" cy="9.500" r="3.300"/>
<rect class="blue" x="64.500" y="1" width="5" height="10" rx="2.500"/><path class="blue" d="M62 7.500c0 6.500 10 6.500 10 0M67 12.500v4"/>
</svg>
<div class="a" style="left:1166px;top:871px;width:94px;height:4px;background:#000;border-radius:2px"></div>
</body></html>
